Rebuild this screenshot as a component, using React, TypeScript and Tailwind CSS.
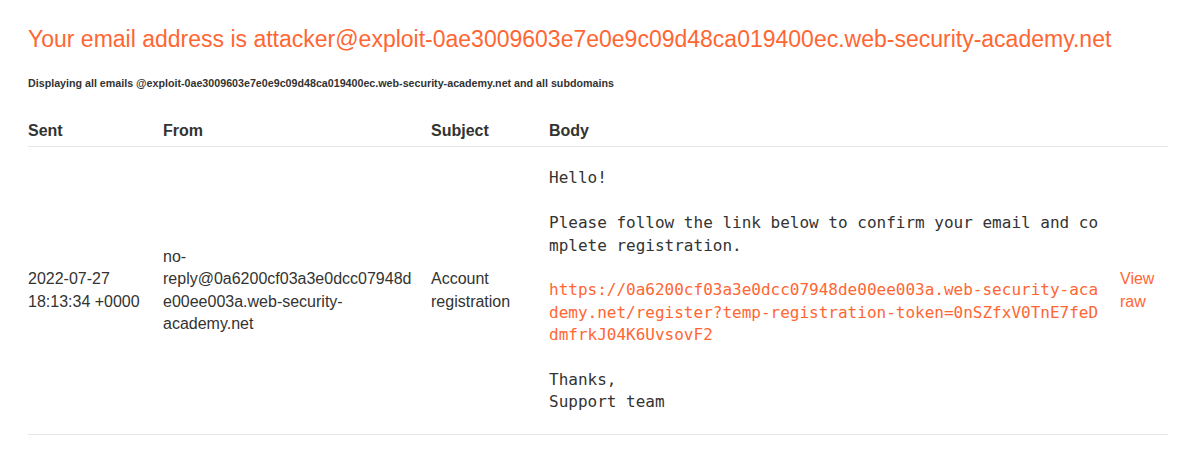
export default function App() {
  const sans = { fontFamily: '"Liberation Sans", Arial, sans-serif' };
  return (
    <div className="min-h-[464px] bg-white px-7 pt-[24px] text-[#333332]" style={sans}>
      <h1 className="text-[23px] font-normal leading-[30px] text-[#ff6633]">
        Your email address is attacker@exploit-0ae3009603e7e0e9c09d48ca019400ec.web-security-academy.net
      </h1>
      <h4 className="mt-[21px] text-[10.7px] font-bold leading-4">
        Displaying all emails @exploit-0ae3009603e7e0e9c09d48ca019400ec.web-security-academy.net and all subdomains
      </h4>
      <table className="mt-[17px] w-[1140px] table-fixed border-collapse text-base leading-[1.4]">
        <colgroup>
          <col className="w-[135px]" />
          <col className="w-[268px]" />
          <col className="w-[118px]" />
          <col className="w-[571px]" />
          <col className="w-[48px]" />
        </colgroup>
        <thead>
          <tr className="border-b border-[#e6e6e6]">
            <th className="pt-3 pb-1 text-left font-bold">Sent</th>
            <th className="pt-3 pb-1 text-left font-bold">From</th>
            <th className="pt-3 pb-1 text-left font-bold">Subject</th>
            <th className="pt-3 pb-1 text-left font-bold">Body</th>
            <th className="pt-3 pb-1"></th>
          </tr>
        </thead>
        <tbody>
          <tr className="border-b border-[#e6e6e6]">
            <td className="py-5 pr-5 align-middle">2022-07-27 18:13:34 +0000</td>
            <td className="py-5 pr-4 align-middle break-words">
              no-reply@0a6200cf03a3e0dcc07948de00ee003a.web-security-academy.net
            </td>
            <td className="py-5 pr-4 align-middle">Account registration</td>
            <td className="py-5 pr-4 align-middle">
              <pre
                className="m-0 whitespace-pre-wrap break-all text-base leading-[1.4] text-[#333332]"
                style={{ fontFamily: '"DejaVu Sans Mono", monospace' }}
              >
                {"Hello!\n\nPlease follow the link below to confirm your email and complete registration.\n\n"}
                <a className="text-[#ff6633]">
                  https://0a6200cf03a3e0dcc07948de00ee003a.web-security-academy.net/register?temp-registration-token=0nSZfxV0TnE7feDdmfrkJ04K6UvsovF2
                </a>
                {"\n\nThanks,\nSupport team"}
              </pre>
            </td>
            <td className="py-5 align-middle">
              <a className="text-[#ff6633]">View raw</a>
            </td>
          </tr>
        </tbody>
      </table>
    </div>
  );
}
